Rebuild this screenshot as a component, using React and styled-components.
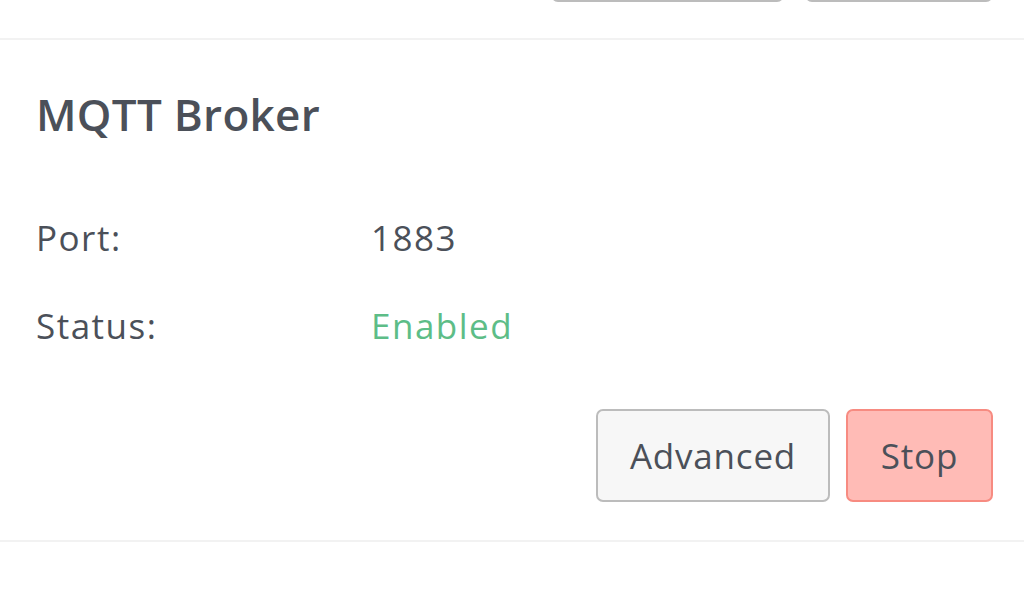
import React from 'react';
import styled, { createGlobalStyle } from 'styled-components';

const GlobalStyle = createGlobalStyle`
  html, body {
    margin: 0;
    padding: 0;
    background: #ffffff;
  }
  body {
    font-family: "Open Sans", "Noto Sans", sans-serif;
    color: #4b5059;
    overflow: hidden;
  }
`;

const Page = styled.div`
  width: 1024px;
  height: 598px;
  overflow: hidden;
`;

const Section = styled.section`
  border-bottom: 2px solid #f2f2f2;
  padding: 0 31px ${p => p.$bottom || 38}px 36px;
  margin-top: ${p => p.$offset || 0}px;
`;

const Title = styled.h2`
  margin: 0;
  padding-top: 44px;
  font-size: 44px;
  line-height: 60px;
  font-weight: 600;
  letter-spacing: 0.3px;
`;

const Rows = styled.div`
  margin-top: 70px;
  display: flex;
  flex-direction: column;
  gap: 40px;
`;

const Row = styled.div`
  display: flex;
  align-items: center;
  font-size: 35px;
  line-height: 48px;
  letter-spacing: 1.5px;
`;

const Label = styled.span`
  width: 335px;
  flex-shrink: 0;
`;

const Value = styled.span`
  color: ${p => (p.$ok ? '#5dbd87' : '#4b5059')};
`;

const Actions = styled.div`
  display: flex;
  justify-content: flex-end;
  gap: ${p => p.$gap || 16}px;
  margin-top: ${p => p.$top || 0}px;
`;

const Button = styled.button`
  height: 93px;
  width: ${p => p.$w}px;
  border-radius: 7px;
  border: 2px solid ${p => (p.$danger ? '#f78b81' : '#bcbcbc')};
  background: ${p => (p.$danger ? '#ffbbb6' : '#f7f7f7')};
  color: #4b5059;
  font-family: inherit;
  font-size: 35px;
  letter-spacing: 0.8px;
  padding: 0;
  cursor: pointer;
`;

export default function App() {
  return (
    <Page>
      <GlobalStyle />
      <Section $offset={-91} $bottom={36}>
        <Actions $gap={21}>
          <Button $w={233} aria-label="Advanced" />
          <Button $w={188} aria-label="Start" />
        </Actions>
      </Section>
      <Section>
        <Title>MQTT Broker</Title>
        <Rows>
          <Row>
            <Label>Port:</Label>
            <Value>1883</Value>
          </Row>
          <Row>
            <Label>Status:</Label>
            <Value $ok>Enabled</Value>
          </Row>
        </Rows>
        <Actions $top={59}>
          <Button $w={234}>Advanced</Button>
          <Button $w={147} $danger>Stop</Button>
        </Actions>
      </Section>
    </Page>
  );
}
